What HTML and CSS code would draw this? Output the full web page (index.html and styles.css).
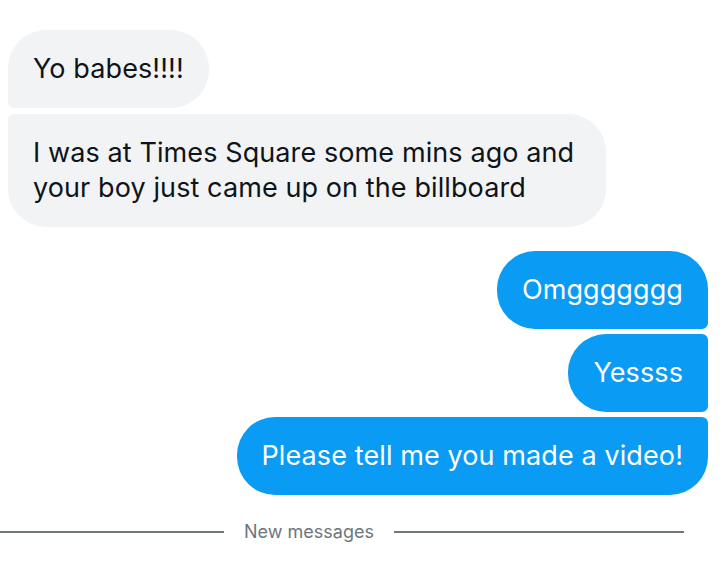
FILE: index.html
```html
<!DOCTYPE html>
<html>
<head>
<meta charset="utf-8">
<link rel="stylesheet" href="styles.css">
</head>
<body>
<div class="chat">
  <div class="group in">
    <div class="bubble first">Yo babes!!!!</div>
    <div class="bubble last">I was at Times Square some mins ago and<br>your boy just came up on the billboard</div>
  </div>
  <div class="group out">
    <div class="bubble first">Omggggggg</div>
    <div class="bubble mid">Yessss</div>
    <div class="bubble last">Please tell me you made a video!</div>
  </div>
  <div class="divider">
    <span class="line"></span>
    <span class="label">New messages</span>
    <span class="line"></span>
  </div>
</div>
</body>
</html>
```
FILE: styles.css
```css
html, body {
  margin: 0;
  padding: 0;
  background: #ffffff;
}
body {
  font-family: Inter, "Noto Sans", sans-serif;
}
.chat {
  padding: 30px 15px 0 8px;
  display: flex;
  flex-direction: column;
}
.group {
  display: flex;
  flex-direction: column;
  gap: 6px;
}
.group.in {
  align-items: flex-start;
}
.group.out {
  align-items: flex-end;
  margin-top: 24px;
  gap: 5px;
}
.bubble {
  font-size: 27px;
  line-height: 35px;
  padding: 21px 25px 22px;
  letter-spacing: 0.1px;
}
.in .bubble {
  background: #f2f3f5;
  color: #0f1419;
}
.in .last {
  padding-right: 32px;
}
.out .bubble {
  background: #0a9bf5;
  color: #ffffff;
}
.in .first { border-radius: 38px 38px 38px 6px; }
.in .last { border-radius: 6px 38px 38px 38px; }
.out .first { border-radius: 38px 38px 6px 38px; }
.out .mid { border-radius: 38px 6px 6px 38px; }
.out .last { border-radius: 38px 6px 38px 38px; }
.divider {
  display: flex;
  align-items: center;
  margin: 26px 0 0 -8px;
  width: 684px;
  gap: 20px;
}
.line {
  flex: 1;
  height: 2px;
  background: #6e767d;
}
.label {
  font-size: 18px;
  color: #6e767d;
}
.divider .line:first-child { flex: 0 0 224px; }
```
